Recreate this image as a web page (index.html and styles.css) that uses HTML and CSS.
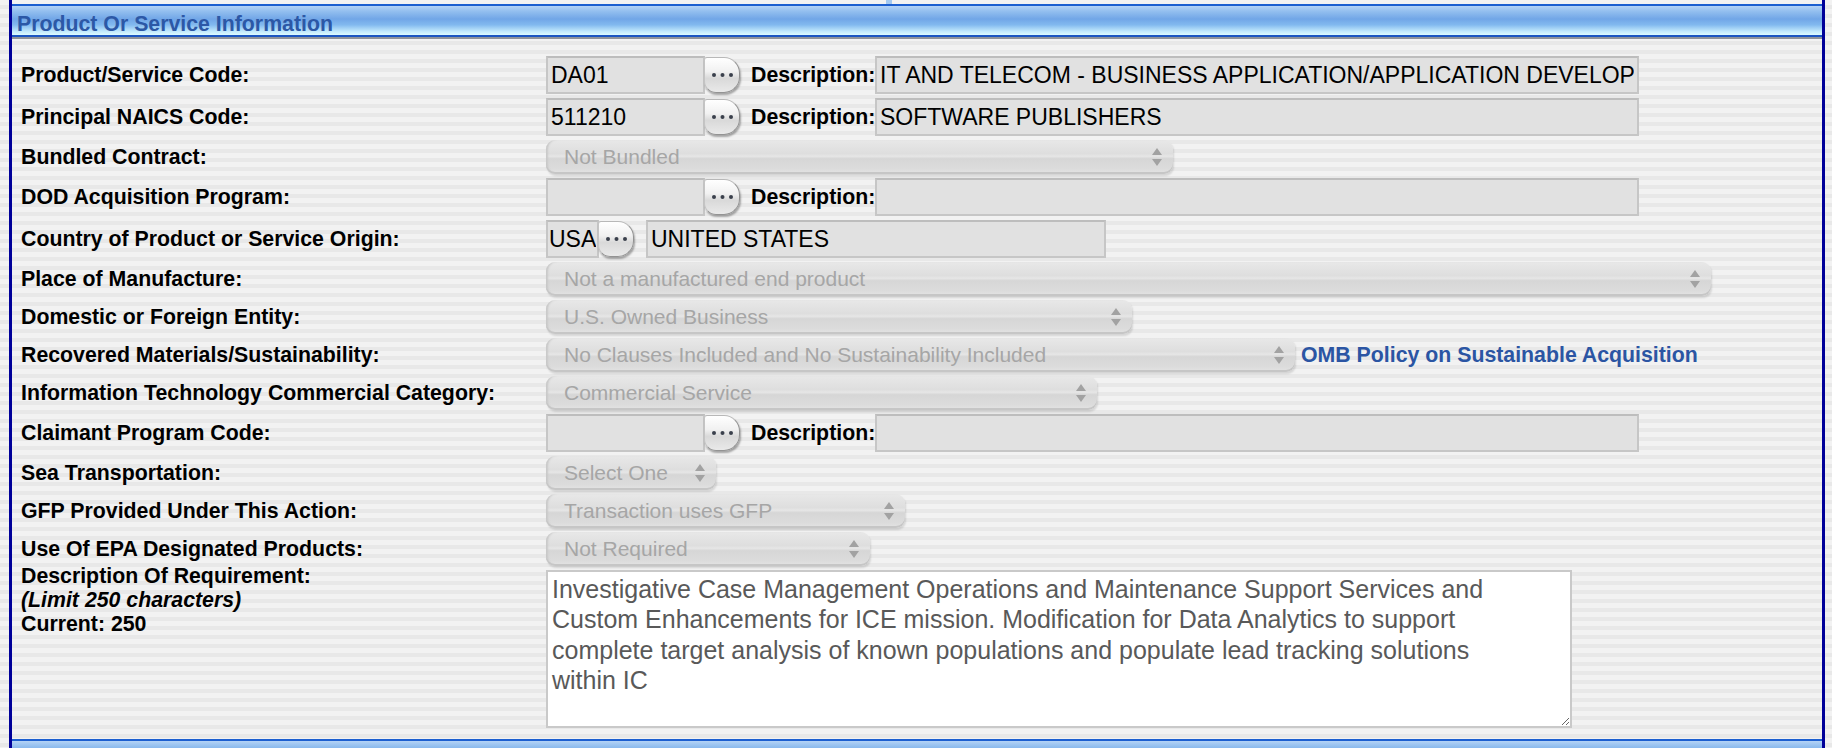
FILE: index.html
```html
<!DOCTYPE html>
<html lang="en">
  <head>
    <meta charset="UTF-8" />
    <title>Product Or Service Information</title>
    <link rel="stylesheet" href="styles.css">
  </head>
  <body>
    <div class="frame">
      <div class="section-head first">
        <h2>Product Or Service Information</h2>
      </div>

      <div class="form">
        <div class="row tall">
          <label class="field-label">Product/Service Code:</label>
          <div class="field">
            <input class="text code" value="DA01" readonly>
            <button class="lookup" type="button"><svg width="23" height="6" viewBox="0 0 23 6"><circle cx="3" cy="3" r="2"/><circle cx="11.5" cy="3" r="2"/><circle cx="20" cy="3" r="2"/></svg></button>
            <span class="desc-label">Description:</span>
            <input class="text desc" value="IT AND TELECOM - BUSINESS APPLICATION/APPLICATION DEVELOPMENT SUPPORT SERVICES (LABOR)" readonly>
          </div>
        </div>

        <div class="row tall">
          <label class="field-label">Principal NAICS Code:</label>
          <div class="field">
            <input class="text code" value="511210" readonly>
            <button class="lookup" type="button"><svg width="23" height="6" viewBox="0 0 23 6"><circle cx="3" cy="3" r="2"/><circle cx="11.5" cy="3" r="2"/><circle cx="20" cy="3" r="2"/></svg></button>
            <span class="desc-label">Description:</span>
            <input class="text desc" value="SOFTWARE PUBLISHERS" readonly>
          </div>
        </div>

        <div class="row">
          <label class="field-label">Bundled Contract:</label>
          <div class="field">
            <span class="popup w-bundled">
              <select disabled><option>Not Bundled</option></select>
              <svg class="arrows" width="10" height="18" viewBox="0 0 10 18"><path d="M5 0 L10 7 H0 Z M0 11 H10 L5 18 Z"/></svg>
            </span>
          </div>
        </div>

        <div class="row tall">
          <label class="field-label">DOD Acquisition Program:</label>
          <div class="field">
            <input class="text code" value="" readonly>
            <button class="lookup" type="button"><svg width="23" height="6" viewBox="0 0 23 6"><circle cx="3" cy="3" r="2"/><circle cx="11.5" cy="3" r="2"/><circle cx="20" cy="3" r="2"/></svg></button>
            <span class="desc-label">Description:</span>
            <input class="text desc" value="" readonly>
          </div>
        </div>

        <div class="row tall">
          <label class="field-label">Country of Product or Service Origin:</label>
          <div class="field">
            <input class="text country-code" value="USA" readonly>
            <button class="lookup" type="button"><svg width="23" height="6" viewBox="0 0 23 6"><circle cx="3" cy="3" r="2"/><circle cx="11.5" cy="3" r="2"/><circle cx="20" cy="3" r="2"/></svg></button>
            <input class="text country-name" value="UNITED STATES" readonly>
          </div>
        </div>

        <div class="row">
          <label class="field-label">Place of Manufacture:</label>
          <div class="field">
            <span class="popup w-place">
              <select disabled><option>Not a manufactured end product</option></select>
              <svg class="arrows" width="10" height="18" viewBox="0 0 10 18"><path d="M5 0 L10 7 H0 Z M0 11 H10 L5 18 Z"/></svg>
            </span>
          </div>
        </div>

        <div class="row">
          <label class="field-label">Domestic or Foreign Entity:</label>
          <div class="field">
            <span class="popup w-domestic">
              <select disabled><option>U.S. Owned Business</option></select>
              <svg class="arrows" width="10" height="18" viewBox="0 0 10 18"><path d="M5 0 L10 7 H0 Z M0 11 H10 L5 18 Z"/></svg>
            </span>
          </div>
        </div>

        <div class="row">
          <label class="field-label">Recovered Materials/Sustainability:</label>
          <div class="field">
            <span class="popup w-recovered">
              <select disabled><option>No Clauses Included and No Sustainability Included</option></select>
              <svg class="arrows" width="10" height="18" viewBox="0 0 10 18"><path d="M5 0 L10 7 H0 Z M0 11 H10 L5 18 Z"/></svg>
            </span>
            <a class="policy-link" href="#">OMB Policy on Sustainable Acquisition</a>
          </div>
        </div>

        <div class="row">
          <label class="field-label">Information Technology Commercial Category:</label>
          <div class="field">
            <span class="popup w-it">
              <select disabled><option>Commercial Service</option></select>
              <svg class="arrows" width="10" height="18" viewBox="0 0 10 18"><path d="M5 0 L10 7 H0 Z M0 11 H10 L5 18 Z"/></svg>
            </span>
          </div>
        </div>

        <div class="row tall">
          <label class="field-label">Claimant Program Code:</label>
          <div class="field">
            <input class="text code" value="" readonly>
            <button class="lookup" type="button"><svg width="23" height="6" viewBox="0 0 23 6"><circle cx="3" cy="3" r="2"/><circle cx="11.5" cy="3" r="2"/><circle cx="20" cy="3" r="2"/></svg></button>
            <span class="desc-label">Description:</span>
            <input class="text desc" value="" readonly>
          </div>
        </div>

        <div class="row">
          <label class="field-label">Sea Transportation:</label>
          <div class="field">
            <span class="popup w-sea">
              <select disabled><option>Select One</option></select>
              <svg class="arrows" width="10" height="18" viewBox="0 0 10 18"><path d="M5 0 L10 7 H0 Z M0 11 H10 L5 18 Z"/></svg>
            </span>
          </div>
        </div>

        <div class="row">
          <label class="field-label">GFP Provided Under This Action:</label>
          <div class="field">
            <span class="popup w-gfp">
              <select disabled><option>Transaction uses GFP</option></select>
              <svg class="arrows" width="10" height="18" viewBox="0 0 10 18"><path d="M5 0 L10 7 H0 Z M0 11 H10 L5 18 Z"/></svg>
            </span>
          </div>
        </div>

        <div class="row">
          <label class="field-label">Use Of EPA Designated Products:</label>
          <div class="field">
            <span class="popup w-epa">
              <select disabled><option>Not Required</option></select>
              <svg class="arrows" width="10" height="18" viewBox="0 0 10 18"><path d="M5 0 L10 7 H0 Z M0 11 H10 L5 18 Z"/></svg>
            </span>
          </div>
        </div>

        <div class="row req">
          <label class="field-label req-label">
            Description Of Requirement:<br>
            <i>(Limit 250 characters)</i><br>
            Current: 250
          </label>
          <div class="field">
            <textarea class="requirement" readonly>Investigative Case Management Operations and Maintenance Support Services and Custom Enhancements for ICE mission. Modification for Data Analytics to support complete target analysis of known populations and populate lead tracking solutions within IC</textarea>
          </div>
        </div>
      </div>

      <div class="section-head next"></div>
    </div>
  </body>
</html>
```

FILE: styles.css
```css
* {
  box-sizing: border-box;
}

html,
body {
  margin: 0;
  height: 100%;
  overflow: hidden;
}

body {
  font-family: "Liberation Sans", Arial, sans-serif;
  background: repeating-linear-gradient(
    180deg,
    #f2f2f2 0px,
    #f2f2f2 5px,
    #e8e8e8 5px,
    #e8e8e8 9px
  );
}

.frame {
  margin-left: 9px;
  width: 1816px;
  height: 748px;
  padding-top: 4px;
  border-left: 3px solid #000099;
  border-right: 3px solid #000099;
}

.section-head {
  position: relative;
  height: 33px;
  border-top: 2px solid #1c5fd0;
  border-bottom: 2px solid #1b56c2;
  background: linear-gradient(
    #b4d3f6 0%,
    #93bfef 18%,
    #71a6e7 45%,
    #82b9ef 65%,
    #c3eafc 88%,
    #dcfbff 100%
  );
  box-shadow: 0 2px 0 #8e939a;
}

.section-head.first::before {
  content: "";
  position: absolute;
  left: 874px;
  top: -6px;
  width: 6px;
  height: 4px;
  background: #a3c9f1;
}

.section-head h2 {
  margin: 0;
  padding: 7px 0 0 5px;
  font-size: 21.3px;
  line-height: 22px;
  color: #2c58a6;
}

.section-head.next {
  margin-top: 11px;
}

.form {
  padding: 19px 0 0 9px;
}

.row {
  display: flex;
  align-items: center;
  height: 34px;
  margin-bottom: 4px;
}

.row.tall {
  height: 38px;
}

.field-label {
  flex: none;
  width: 525px;
  font-size: 21.3px;
  font-weight: bold;
  color: #000;
}

.field {
  display: flex;
  align-items: center;
}

.field > * {
  flex: none;
}

.text {
  height: 38px;
  padding: 0 3px;
  border: 2px solid #c6c6c6;
  border-top-color: #bdbdbd;
  background: #e1e1e1;
  font-family: "Liberation Sans", Arial, sans-serif;
  font-size: 23px;
  color: #000;
  outline: none;
}

.code {
  width: 159px;
}

.desc {
  width: 764px;
}

.country-code {
  width: 53px;
  padding: 0 1px;
}

.country-name {
  width: 460px;
  margin-left: 12px;
}

.lookup {
  position: relative;
  width: 36px;
  height: 36px;
  margin-left: -1px;
  padding: 0;
  border: 1px solid #939393;
  border-left-color: #c4c4c4;
  border-top-color: #b8b8b8;
  border-radius: 3px 16px 16px 12px;
  background: linear-gradient(#ffffff 0%, #f1f1f1 40%, #d9d9d9 60%, #e9e9e9 100%);
  box-shadow: 1px 2px 2px rgba(0, 0, 0, 0.32);
  display: flex;
  align-items: center;
  justify-content: center;
}

.lookup svg {
  fill: #3a404c;
}

.desc-label {
  width: 124px;
  margin-left: 11px;
  font-size: 21.3px;
  font-weight: bold;
  white-space: nowrap;
}

.popup {
  position: relative;
  display: block;
  height: 34px;
}

.popup select {
  width: 100%;
  height: 34px;
  padding: 0 0 1px 18px;
  border: none;
  border-radius: 9px;
  appearance: none;
  -webkit-appearance: none;
  opacity: 1;
  font-family: "Liberation Sans", Arial, sans-serif;
  font-size: 21px;
  color: #a6a6a6;
  background: linear-gradient(
    #e8e8e8 0%,
    #dedede 40%,
    #e6e6e6 48%,
    #d6d6d6 55%,
    #dcdcdc 85%,
    #e4e4e4 100%
  );
  box-shadow: inset 0 -2px 0 #c6c6c6, inset 3px 0 2px -1px #c9c9c9,
    1px 2px 2px rgba(0, 0, 0, 0.12);
}

.popup .arrows {
  position: absolute;
  right: 11px;
  top: 8px;
  fill: #a2a2a2;
}

.w-bundled { width: 627px; }
.w-place { width: 1165px; }
.w-domestic { width: 586px; }
.w-recovered { width: 749px; }
.w-it { width: 551px; }
.w-sea { width: 170px; }
.w-gfp { width: 359px; }
.w-epa { width: 324px; }

.policy-link {
  margin-left: 6px;
  font-size: 21.3px;
  font-weight: bold;
  color: #2b55a3;
  text-decoration: none;
}

.row.req {
  height: auto;
  align-items: flex-start;
}

.req-label {
  margin-top: -6px;
  line-height: 24px;
}

.requirement {
  display: block;
  width: 1026px;
  height: 158px;
  padding: 2px 40px 2px 4px;
  border: 2px solid #c9c9c9;
  background: #fff;
  font-family: "Liberation Sans", Arial, sans-serif;
  font-size: 25px;
  line-height: 30.4px;
  color: #595959;
  outline: none;
}
```
